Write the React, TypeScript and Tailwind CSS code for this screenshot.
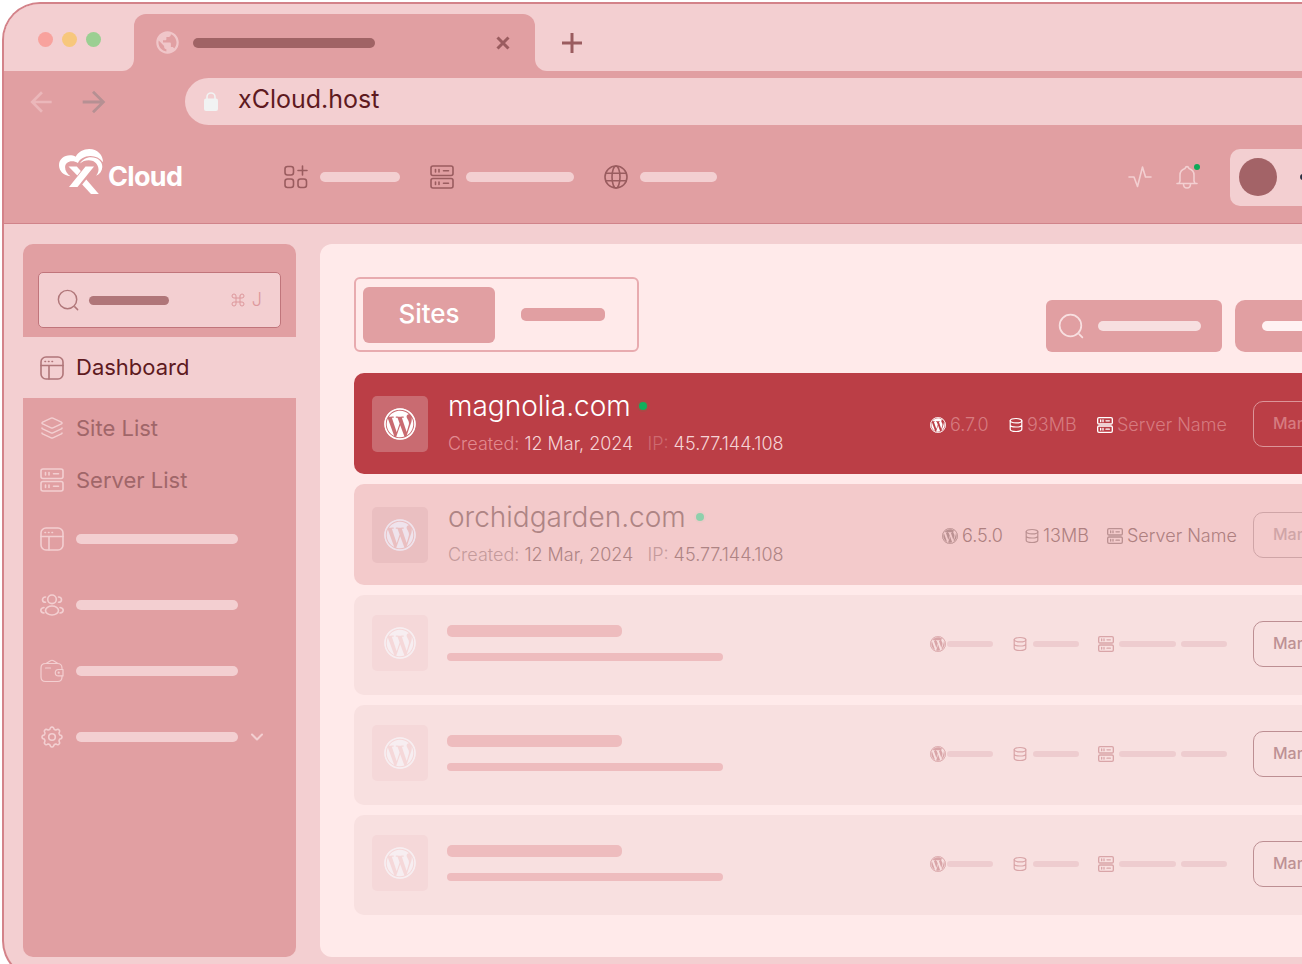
import React from 'react';
import clsx from 'clsx';
import { Command, Layers } from 'lucide-react';
import { FaWordpress } from 'react-icons/fa';
import { MdArrowBack, MdArrowForward, MdPublic } from 'react-icons/md';

type IconProps = { className?: string };

const stroke = {
  fill: 'none',
  stroke: 'currentColor',
  strokeWidth: 1.6,
  strokeLinecap: 'round',
  strokeLinejoin: 'round',
} as const;

const LogoMark: React.FC<IconProps> = ({ className }) => (
  <svg viewBox="0 0 44 45" className={className} fill="currentColor" aria-hidden="true">
    <path d="M11.500 27.200C4.500 26.600 0 22 0 16.200C0 10.300 5 6.300 11 6.300C13 6.300 15 6.700 16.700 7.700C19.200 3 24.500 0 30.200 0C38.500 0 44 6 44 13.200C40.800 9 36.200 7 31.200 7.100C25.500 7.200 21 9.800 18.900 14.100C17.100 12.800 15.200 12.200 13 12.200C8.900 12.200 6.100 14.700 6.100 18.200C6.100 22 8.300 24.900 11.500 27.200Z" />
    <path d="M20.900 14.600C23.200 11 27.200 8.300 32 8.300C38.500 8.300 43.500 12.400 43.300 18C43.100 22 41 25 37.100 26.800C39.200 24 39.900 21.500 39.300 18.800C38.200 14 34.500 11.300 29.800 11.300C26.200 11.300 23.300 12.500 20.900 14.600Z" />
    <path d="M26.500 17.400H35L18.500 38H10Z" />
    <path d="M9.500 17.400H17.800L21.800 22L18.300 26.500Z" />
    <path d="M27.300 30.500L39.800 45H32L23.200 35.500Z" />
  </svg>
);

const WordPressIcon: React.FC<IconProps> = ({ className }) => (
  <svg viewBox="0 0 512 512" className={className} aria-hidden="true">
    <FaWordpress width="512" height="512" size={512} />
    <circle cx="256" cy="256" r="240" fill="none" stroke="currentColor" strokeWidth="24" />
  </svg>
);

const LockIcon: React.FC<IconProps> = ({ className }) => (
  <svg viewBox="0 0 14 19" className={className} aria-hidden="true">
    <rect x="0" y="6.500" width="14" height="12.500" rx="2" fill="currentColor" />
    <path d="M3 8V5a4 4 0 0 1 8 0v3" fill="none" stroke="currentColor" strokeWidth="1.600" />
  </svg>
);

const SearchIcon: React.FC<IconProps> = ({ className }) => (
  <svg viewBox="0 0 24 24" className={className} {...stroke} aria-hidden="true">
    <circle cx="11.500" cy="11.500" r="10" />
    <path d="M19.500 19.500l3 3" />
  </svg>
);

const AppsIcon: React.FC<IconProps> = ({ className }) => (
  <svg viewBox="0 0 24 24" className={className} {...stroke} aria-hidden="true">
    <rect x="1" y="1.500" width="8.500" height="8.500" rx="2.500" />
    <rect x="1" y="14" width="8.500" height="8.500" rx="2.500" />
    <rect x="14" y="14" width="8.500" height="8.500" rx="2.500" />
    <path d="M18.500 1v9M14 5.500h9" />
  </svg>
);

const ServerIcon: React.FC<IconProps> = ({ className }) => (
  <svg viewBox="0 0 24 24" className={className} {...stroke} aria-hidden="true">
    <rect x="1" y="1" width="22" height="9.500" rx="2" />
    <rect x="1" y="13.500" width="22" height="9.500" rx="2" />
    <path d="M5.500 4.500v2.500M9 4.500v2.500M13.500 5.750h5M5.500 17v2.500M9 17v2.500M13.500 18.250h5" />
  </svg>
);

const GlobeIcon: React.FC<IconProps> = ({ className }) => (
  <svg viewBox="0 0 24 24" className={className} {...stroke} aria-hidden="true">
    <circle cx="12" cy="12" r="11" />
    <ellipse cx="12" cy="12" rx="4" ry="11" />
    <path d="M2 8.300h20M2 15.700h20" />
  </svg>
);

const PulseIcon: React.FC<IconProps> = ({ className }) => (
  <svg viewBox="0 0 24 24" className={className} {...stroke} aria-hidden="true">
    <path d="M1 12h5l3.500 9.500L14.500 2l3 10H23" />
  </svg>
);

const BellIcon: React.FC<IconProps> = ({ className }) => (
  <svg viewBox="0 0 24 24" className={className} {...stroke} aria-hidden="true">
    <path d="M2 18.500h20M4 18.500l1-2.500V10c0-3.500 2.200-5.500 5-6.500.5-1.300 1.200-1.900 2-1.900s1.500.6 2 1.900c2.800 1 5 3 5 6.500v6l1 2.500" />
    <path d="M8.500 19c0 2.500 1.500 4 3.500 4s3.500-1.500 3.500-4" />
  </svg>
);

const PanelIcon: React.FC<IconProps> = ({ className }) => (
  <svg viewBox="0 0 24 24" className={className} {...stroke} aria-hidden="true">
    <rect x="1" y="1" width="22" height="22" rx="5" />
    <path d="M1 9.500h22M9 9.500V23" />
    <path d="M5 5.500h.5M8.500 5.500h.5M12 5.500h.5" />
  </svg>
);

const UsersIcon: React.FC<IconProps> = ({ className }) => (
  <svg viewBox="0 0 24 24" className={className} {...stroke} aria-hidden="true">
    <circle cx="12" cy="6.300" r="4.300" />
    <ellipse cx="12" cy="17.500" rx="6.500" ry="4.500" />
    <path d="M5.500 4C3.700 4 2.500 5.300 2.500 6.700s1.200 2.600 3 2.600M18.500 4c1.800 0 3 1.300 3 2.700s-1.200 2.600-3 2.600" />
    <path d="M4 14.500c-2 .3-3.200 1.400-3.200 2.700S2 19.700 4 20M20 14.500c2 .3 3.200 1.400 3.200 2.700S22 19.700 20 20" />
  </svg>
);

const WalletIcon: React.FC<IconProps> = ({ className }) => (
  <svg viewBox="0 0 24 24" className={className} {...stroke} strokeWidth={1.2} aria-hidden="true">
    <path d="M22 9.500V9c0-2.700-1.800-4.500-4.500-4.500H5.500C2.800 4.500 1 6.300 1 9v9c0 2.700 1.800 4.500 4.500 4.500h12c2.700 0 4.500-1.800 4.500-4.500v-1" />
    <path d="M23 10.500h-4.500a3.200 3.200 0 0 0 0 6.400H23zM5.500 9h5M6.500 4.200l4-2.500c1-.6 2-.6 3 0l4 2.500" />
    <circle cx="18.700" cy="13.700" r="0.500" />
  </svg>
);

// wavy outline with eight lobes
const gearPoints = Array.from({ length: 96 }, (_, i) => {
  const a = (i / 96) * Math.PI * 2;
  const r = 8.9 + Math.tanh(Math.cos(a * 8) * 1.8) * 1.1;
  return `${(12 + r * Math.sin(a)).toFixed(2)},${(12 - r * Math.cos(a)).toFixed(2)}`;
}).join(' ');

const GearIcon: React.FC<IconProps> = ({ className }) => (
  <svg viewBox="0 0 24 24" className={className} {...stroke} aria-hidden="true">
    <polygon points={gearPoints} />
    <circle cx="12" cy="12" r="3.300" />
  </svg>
);

const DatabaseIcon: React.FC<IconProps> = ({ className }) => (
  <svg viewBox="0 0 14 16" className={className} {...stroke} strokeWidth={1.2} aria-hidden="true">
    <ellipse cx="7" cy="3.700" rx="5.800" ry="2.200" />
    <path d="M1.200 3.700v8.600c0 1.200 2.600 2.200 5.800 2.200s5.800-1 5.800-2.200V3.700M1.200 8c0 1.200 2.600 2 5.800 2s5.800-.8 5.800-2" />
  </svg>
);

const Bar: React.FC<IconProps> = ({ className }) => (
  <span className={clsx('block shrink-0 rounded-[5px]', className)} />
);

const TitleBar: React.FC = () => (
  <div className="flex h-[67px] bg-[#e19fa2]">
    <div className="flex w-[130px] shrink-0 items-center gap-[9px] rounded-br-xl bg-[#f3cfd1] pl-[34px] pt-1">
      <span className="size-[15px] rounded-full bg-[#f8a29d]" />
      <span className="size-[15px] rounded-full bg-[#f7c77c]" />
      <span className="size-[15px] rounded-full bg-[#9bcf92]" />
    </div>
    <div className="w-[401px] shrink-0 bg-[#f3cfd1] pt-2.5">
      <div className="flex h-full items-center rounded-t-xl bg-[#e19fa2] pl-5 pr-6">
        <MdPublic className="size-[27px] text-[#f0c6c9]" />
        <Bar className="ml-3 h-[10px] w-[182px] bg-[#a06365]" />
        <button type="button" aria-label="Close tab" className="ml-auto text-[#9a5c5f]">
          <svg viewBox="0 0 16 16" className="size-4" stroke="currentColor" strokeWidth="3">
            <path d="M2.500 2.500l11 11M13.500 2.500l-11 11" />
          </svg>
        </button>
      </div>
    </div>
    <div className="flex flex-1 items-center rounded-bl-xl bg-[#f3cfd1] pl-[26px] pt-2.5">
      <button type="button" aria-label="New tab" className="text-[#9a5c5f]">
        <svg viewBox="0 0 22 22" className="size-[22px]" stroke="currentColor" strokeWidth="3">
          <path d="M11 1v20M1 11h20" />
        </svg>
      </button>
    </div>
  </div>
);

const AddressBar: React.FC = () => (
  <div className="flex items-center bg-[#e19fa2] pl-[21px] pt-[7px]">
    <button type="button" aria-label="Back" className="text-[#ebb7ba]">
      <MdArrowBack className="size-8" />
    </button>
    <button type="button" aria-label="Forward" className="ml-5 text-[#b69093]">
      <MdArrowForward className="size-[34px]" />
    </button>
    <div className="ml-[74px] flex h-[47px] flex-1 items-center rounded-l-full bg-[#f3cfd1] pl-[19px]">
      <LockIcon className="h-[19px] w-3.5 text-[#f1f3f3]" />
      <input
        aria-label="Address"
        defaultValue="xCloud.host"
        className="ml-5 h-10 min-w-0 flex-1 bg-transparent pb-1.5 text-[25px] text-[#5e1a1f] outline-none"
      />
    </div>
  </div>
);

const TopNav: React.FC = () => (
  <header className="flex h-[99px] items-center border-b border-[#d0838a] bg-[#e19fa2] pl-[55px] pt-[6px]">
    <a href="#home" className="flex w-[225px] items-center text-white">
      <LogoMark className="-mt-3 h-[45px] w-11 shrink-0" />
      <span className="ml-[5px] text-[27px] font-bold tracking-tight">Cloud</span>
    </a>
    <nav className="flex items-center">
      <a href="#apps" aria-label="Apps" className="flex items-center gap-3 text-[#9a5c5f]">
        <AppsIcon className="size-6" />
        <Bar className="h-[10px] w-20 bg-[#f3cfd1]" />
      </a>
      <a href="#servers" aria-label="Servers" className="ml-[30px] flex items-center gap-3 text-[#9a5c5f]">
        <ServerIcon className="size-6" />
        <Bar className="h-[10px] w-[108px] bg-[#f3cfd1]" />
      </a>
      <a href="#domains" aria-label="Domains" className="ml-[30px] flex items-center gap-3 text-[#9a5c5f]">
        <GlobeIcon className="size-6" />
        <Bar className="h-[10px] w-[77px] bg-[#f3cfd1]" />
      </a>
    </nav>
    <div className="ml-auto flex items-center text-[#f3cfd1]">
      <button type="button" aria-label="Activity">
        <PulseIcon className="size-6" />
      </button>
      <button type="button" aria-label="Notifications" className="relative ml-[23px]">
        <BellIcon className="size-6" />
        <span className="absolute -right-px -top-px size-1.5 rounded-full bg-[#0fa958]" />
      </button>
      <button
        type="button"
        aria-label="Account"
        className="ml-[31px] flex h-[57px] w-[136px] items-center rounded-l-[10px] bg-[#f3cfd1] pl-[9px]"
      >
        <span className="size-[38px] rounded-full bg-[#a36367]" />
        <span className="ml-[23px] size-1.5 rounded-full bg-[#2a3042]" />
      </button>
    </div>
  </header>
);

const moreItems = [
  { id: 'pages', Icon: PanelIcon },
  { id: 'team', Icon: UsersIcon },
  { id: 'billing', Icon: WalletIcon },
  { id: 'settings', Icon: GearIcon, chevron: true },
];

const Sidebar: React.FC = () => (
  <aside className="w-[273px] shrink-0 rounded-[10px] bg-[#e19fa2] pt-7">
    <label className="mx-[15px] flex h-14 items-center rounded-[5px] border border-[#c0757b] bg-[#f3cfd1] pl-[18px] pr-[18px]">
      <SearchIcon className="size-[22px] text-[#b07679]" />
      <Bar className="ml-[10px] h-[9px] w-20 bg-[#b07679]" />
      <input type="search" aria-label="Search" className="min-w-0 flex-1 bg-transparent outline-none" />
      <Command className="size-4 text-[#dd989c]" strokeWidth={1.5} />
      <span className="ml-1.5 text-lg font-light text-[#dd989c]">J</span>
    </label>
    <nav className="mt-[9px] text-[22px]">
      <a href="#dashboard" className="flex h-[61px] items-center gap-3 bg-[#f3cfd1] pl-[17px] text-[#5e1a1f]">
        <PanelIcon className="size-6 text-[#b07679]" />
        Dashboard
      </a>
      <a href="#sites" className="flex h-[60px] items-center gap-3 pl-[17px] text-[#a06669]">
        <Layers className="size-6 text-[#f3cfd1]" strokeWidth={1.5} />
        Site List
      </a>
      <a href="#server-list" className="flex h-11 items-center gap-3 pl-[17px] text-[#a06669]">
        <ServerIcon className="size-6 text-[#f3cfd1]" />
        Server List
      </a>
      <div className="pt-1">
        {moreItems.map(({ id, Icon, chevron }) => (
          <a key={id} href={`#${id}`} aria-label={id} className="flex h-[66px] items-center gap-3 pl-[17px] text-[#f3cfd1]">
            <Icon className="size-6" />
            <Bar className="h-[10px] w-[162px] bg-[#f3cfd1]" />
            {chevron && (
              <svg viewBox="0 0 14 14" className="size-3.5" {...stroke} strokeWidth={2} aria-hidden="true">
                <path d="M2 4.500l5 5 5-5" />
              </svg>
            )}
          </a>
        ))}
      </div>
    </nav>
  </aside>
);

const Toolbar: React.FC = () => (
  <div className="flex items-end justify-between">
    <div className="flex h-[75px] w-[285px] items-center rounded-md border-2 border-[#e8abaf] pl-[7px]">
      <button type="button" className="h-14 w-[132px] rounded-md bg-[#e19fa2] pb-0.5 text-[26px] font-medium text-white">
        Sites
      </button>
      <button type="button" aria-label="Servers" className="ml-[26px]">
        <Bar className="h-[13px] w-[84px] bg-[#e19fa2]" />
      </button>
    </div>
    <div className="flex gap-[13px]">
      <label className="flex h-[52px] w-[176px] items-center rounded-md bg-[#e19fa2] pl-3">
        <SearchIcon className="size-[26px] text-[#f8dfe0]" />
        <Bar className="ml-[14px] h-[10px] w-[103px] bg-[#f7dfe0]" />
        <input type="search" aria-label="Search sites" className="w-2 bg-transparent outline-none" />
      </label>
      <button
        type="button"
        aria-label="Filter"
        className="flex h-[52px] w-[131px] items-center rounded-l-[10px] bg-[#e19fa2] pl-[27px]"
      >
        <Bar className="h-[10px] w-20 bg-[#fff2f3]" />
      </button>
    </div>
  </div>
);

const sites = [
  {
    name: 'magnolia.com',
    version: '6.7.0',
    size: '93MB',
    row: 'bg-[#bb3e46]',
    tile: 'bg-[#c96b71] text-white',
    title: 'text-white',
    dot: 'ml-2 bg-[#0fb05c] ring-[#a94a46]',
    label: 'text-[#e18a90]',
    ip: 'text-[#cd6a71]',
    value: 'text-[#f5d3d5]',
    cols: 'grid-cols-[79px_88px_156px]',
    icon: 'text-white',
    meta: 'text-[#d67b80]',
    button: 'border-[#dc9599] text-[#d67b80]',
  },
  {
    name: 'orchidgarden.com',
    version: '6.5.0',
    size: '13MB',
    row: 'bg-[#f3cacb]',
    tile: 'bg-[#eabfc1] text-[#efe3ec]',
    title: 'text-[#ae8484]',
    dot: 'ml-2.5 bg-[#8fd0ac] ring-[#eccac8]',
    label: 'text-[#c49a9b]',
    ip: 'text-[#c49a9b]',
    value: 'text-[#ae8484]',
    cols: 'grid-cols-[83px_82px_146px]',
    icon: 'text-[#bb9192]',
    meta: 'text-[#ae8080]',
    button: 'border-[#cfa5a7] text-[#cfa5a7]',
  },
];

const ManageButton: React.FC<IconProps> = ({ className }) => (
  <button type="button" className={clsx('h-[46px] w-[113px] shrink-0 rounded-[10px] border pb-0.5 pl-[19px] text-left font-medium', className)}>
    Manage
  </button>
);

const SiteRow: React.FC<{ site: (typeof sites)[number] }> = ({ site }) => (
  <li className={clsx('flex h-[101px] items-center rounded-l-[10px] pl-[18px]', site.row)}>
    <span className={clsx('flex size-14 shrink-0 items-center justify-center rounded-[5px]', site.tile)}>
      <WordPressIcon className="size-8" />
    </span>
    <div className="ml-5 flex-1 whitespace-nowrap pt-0.5">
      <h2 className={clsx('flex items-center text-[28px] leading-9 font-light', site.title)}>
        {site.name}
        <span className={clsx('size-2 rounded-full ring-2', site.dot)} />
      </h2>
      <p className={clsx('mt-0.5 text-lg leading-9 font-light', site.value)}>
        <span className={site.label}>Created:</span> 12 Mar, 2024
        <span className={clsx('ml-3.5', site.ip)}>IP:</span> 45.77.144.108
      </p>
    </div>
    <div className={clsx('grid whitespace-nowrap pt-0.5 text-lg font-light', site.cols, site.meta)}>
      <span className="flex items-center gap-1">
        <WordPressIcon className={clsx('size-4', site.icon)} />
        {site.version}
      </span>
      <span className="flex items-center gap-1">
        <DatabaseIcon className={clsx('h-4 w-3.5', site.icon)} />
        {site.size}
      </span>
      <span className="flex items-center gap-1">
        <ServerIcon className={clsx('size-4 stroke-2', site.icon)} />
        Server Name
      </span>
    </div>
    <ManageButton className={site.button} />
  </li>
);

const PlaceholderRow: React.FC = () => (
  <li className="flex h-[100px] items-center rounded-l-[10px] bg-[#f8e0e0] pb-0.5 pl-[18px]">
    <span className="mb-0.5 flex size-14 shrink-0 items-center justify-center rounded-[5px] bg-[#f5d8d9] text-[#f7eef1]">
      <WordPressIcon className="size-8" />
    </span>
    <div className="mb-0.5 ml-[19px] flex flex-1 flex-col gap-4">
      <Bar className="h-3 w-[175px] bg-[#eebcbe]" />
      <Bar className="h-2 w-[276px] bg-[#eebcbe]" />
    </div>
    <div className="grid grid-cols-[83px_85px_155px] text-[#d9a5a8]">
      <span className="flex items-center gap-px">
        <WordPressIcon className="size-4" />
        <Bar className="h-1.5 w-[46px] bg-[#eecccf]" />
      </span>
      <span className="flex items-center gap-1.5">
        <DatabaseIcon className="h-4 w-3.5" />
        <Bar className="h-1.5 w-[46px] bg-[#eecccf]" />
      </span>
      <span className="flex items-center gap-[5px]">
        <ServerIcon className="size-4 stroke-2" />
        <Bar className="h-1.5 w-[57px] bg-[#eecccf]" />
        <Bar className="h-1.5 w-[46px] bg-[#eecccf]" />
      </span>
    </div>
    <ManageButton className="border-[#bd8f93] text-[#bd9194]" />
  </li>
);

export default function App() {
  return (
    <div className="h-screen overflow-hidden bg-white pl-0.5 pt-0.5 font-['Inter',sans-serif]">
      {/* the browser window runs past the right and bottom edges */}
      <div className="-mr-16 overflow-hidden rounded-l-[38px] border-2 border-r-0 border-[#d38289] bg-[#f3cfd1]">
        <TitleBar />
        <AddressBar />
        <TopNav />
        <div className="flex gap-6 pb-5 pl-[19px] pt-5">
          <Sidebar />
          <main className="flex-1 rounded-l-xl bg-[#ffeaea] pb-[42px] pl-[34px] pt-[33px]">
            <Toolbar />
            <ul className="mt-[21px] flex flex-col gap-2.5">
              {sites.map(site => (
                <SiteRow key={site.name} site={site} />
              ))}
              <PlaceholderRow />
              <PlaceholderRow />
              <PlaceholderRow />
            </ul>
          </main>
        </div>
      </div>
    </div>
  );
}
